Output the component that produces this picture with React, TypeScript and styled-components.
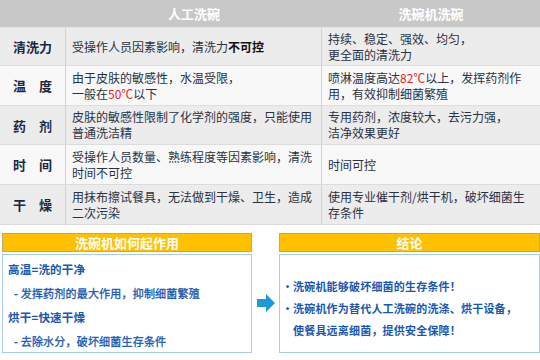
import React from "react"
import styled, { createGlobalStyle } from "styled-components"

const GlobalStyle = createGlobalStyle`
  html, body {
    margin: 0;
    padding: 0;
    background: #fff;
  }
  body {
    font-family: "Noto Sans CJK SC", "Noto Sans", sans-serif;
    width: 540px;
    height: 360px;
    overflow: hidden;
  }
`

const Hot = styled.span`
  color: #e8261c;
`

const rows = [
  {
    label: "清洗力",
    manual: (
      <>
        受操作人员因素影响，清洗力<b>不可控</b>
      </>
    ),
    machine: (
      <>
        持续、稳定、强效、均匀，
        <br />
        更全面的清洗力
      </>
    ),
    h: 38,
  },
  {
    label: "温　度",
    manual: (
      <>
        由于皮肤的敏感性，水温受限，
        <br />
        一般在<Hot>50℃</Hot>以下
      </>
    ),
    machine: (
      <>
        喷淋温度高达<Hot>82℃</Hot>以上，发挥药剂作
        <br />
        用，有效抑制细菌繁殖
      </>
    ),
    h: 40,
  },
  {
    label: "药　剂",
    manual: (
      <>
        皮肤的敏感性限制了化学剂的强度，只能使用
        <br />
        普通洗洁精
      </>
    ),
    machine: (
      <>
        专用药剂，浓度较大，去污力强，
        <br />
        洁净效果更好
      </>
    ),
    h: 39,
  },
  {
    label: "时　间",
    manual: (
      <>
        受操作人员数量、熟练程度等因素影响，清洗
        <br />
        时间不可控
      </>
    ),
    machine: <>时间可控</>,
    h: 40,
  },
  {
    label: "干　燥",
    manual: (
      <>
        用抹布擦试餐具，无法做到干燥、卫生，造成
        <br />
        二次污染
      </>
    ),
    machine: (
      <>
        使用专业催干剂/烘干机，破坏细菌生
        <br />
        存条件
      </>
    ),
    h: 40,
  },
]

const App = () => {
  return (
    <>
      <GlobalStyle />
      <Page>
        <Table>
          <HeadRow>
            <HeadCell />
            <HeadCell>人工洗碗</HeadCell>
            <HeadCell>洗碗机洗碗</HeadCell>
          </HeadRow>
          {rows.map((r, i) => (
            <Row key={r.label} $alt={i % 2 === 1} $h={r.h}>
              <Label>{r.label}</Label>
              <Cell>
                <p>{r.manual}</p>
              </Cell>
              <Cell>
                <p>{r.machine}</p>
              </Cell>
            </Row>
          ))}
        </Table>

        <Bottom>
          <Panel>
            <PanelTitle>洗碗机如何起作用</PanelTitle>
            <PanelBody>
              <Heading>高温=洗的干净</Heading>
              <Sub>- 发挥药剂的最大作用，抑制细菌繁殖</Sub>
              <Heading>烘干=快速干燥</Heading>
              <Sub>- 去除水分，破坏细菌生存条件</Sub>
            </PanelBody>
          </Panel>

          <ArrowWrap>
            <svg width="18" height="18" viewBox="0 0 18 18">
              <path d="M0 5 H9 V0 L18 9 L9 18 V13 H0 Z" fill="#1a9ad9" />
            </svg>
          </ArrowWrap>

          <Panel>
            <PanelTitle>结论</PanelTitle>
            <PanelBody $center>
              <Bullet>
                <Dot>·</Dot>
                <span>洗碗机能够破坏细菌的生存条件！</span>
              </Bullet>
              <Bullet>
                <Dot>·</Dot>
                <span>
                  洗碗机作为替代人工洗碗的洗涤、烘干设备，
                  <br />
                  使餐具远离细菌，提供安全保障！
                </span>
              </Bullet>
            </PanelBody>
          </Panel>
        </Bottom>
      </Page>
    </>
  )
}

export default App

const Page = styled.div`
  width: 540px;
  height: 360px;
  display: flex;
  flex-direction: column;
`

const Table = styled.div`
  display: flex;
  flex-direction: column;
  width: 540px;
`

const HeadRow = styled.div`
  display: grid;
  grid-template-columns: 66px 256px 1fr;
  height: 27px;
  background: #c8c8c8;
  border-bottom: 1px solid #e4e4e4;
`

const HeadCell = styled.div`
  display: flex;
  align-items: center;
  justify-content: center;
  color: #fff;
  font-weight: bold;
  font-size: 13px;
`

const Row = styled.div<{ $alt: boolean; $h: number }>`
  display: grid;
  grid-template-columns: 66px 256px 1fr;
  height: ${(p) => p.$h}px;
  background: ${(p) => (p.$alt ? "#f8f8f8" : "#ececec")};
  border-bottom: 1px solid #dcdcdc;
  box-sizing: border-box;
`

const Label = styled.div`
  display: flex;
  align-items: center;
  justify-content: center;
  font-weight: bold;
  font-size: 13px;
  color: #1c2740;
  border-right: 1px solid #d2d2d2;
`

const Cell = styled.div`
  display: flex;
  align-items: center;
  padding-left: 6px;
  font-size: 12px;
  line-height: 16px;
  color: #2a3142;
  border-right: 1px solid #d2d2d2;
  &:last-child {
    border-right: none;
  }
  p {
    margin: 0;
  }
  b {
    color: #111;
  }
`

const Bottom = styled.div`
  display: grid;
  grid-template-columns: 250px 27px 261px;
  padding: 8px 0 0 2px;
`

const Panel = styled.div`
  display: flex;
  flex-direction: column;
  gap: 2px;
`

const PanelTitle = styled.div`
  height: 17px;
  background: #ffc000;
  border: 1px solid #b9a970;
  display: flex;
  align-items: center;
  justify-content: center;
  color: #fff;
  font-weight: bold;
  font-size: 13px;
`

const PanelBody = styled.div<{ $center?: boolean }>`
  height: 99px;
  box-sizing: border-box;
  border: 1px solid #a6cde8;
  background: #fff;
  display: flex;
  flex-direction: column;
  justify-content: ${(p) => (p.$center ? "center" : "flex-start")};
  padding: ${(p) => (p.$center ? "8px 0 0 2px" : "2px 0 0 5px")};
  color: #1a57b0;
  font-weight: bold;
  font-size: 11px;
  letter-spacing: 0.2px;
`

const Heading = styled.div`
  line-height: 24px;
  font-size: 11.5px;
`

const Sub = styled.div`
  line-height: 24px;
  padding-left: 6px;
  font-weight: normal;
  -webkit-text-stroke: 0.3px #1a57b0;
`

const ArrowWrap = styled.div`
  display: flex;
  align-items: center;
  justify-content: center;
  padding-top: 20px;
`

const Bullet = styled.div`
  display: flex;
  gap: 6px;
  line-height: 22px;
`

const Dot = styled.span`
  width: 5px;
  text-align: center;
`
